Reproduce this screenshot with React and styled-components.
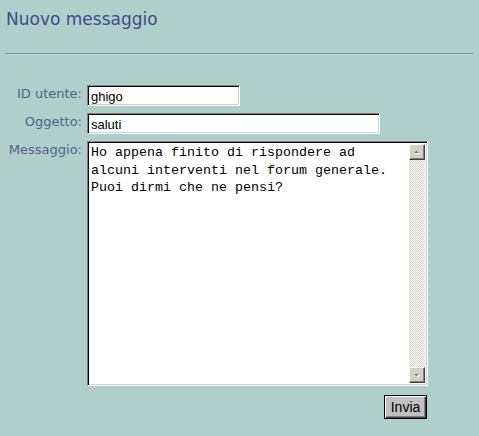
import React from 'react';
import styled, { createGlobalStyle } from 'styled-components';

const GlobalStyle = createGlobalStyle`
  html, body {
    margin: 0;
    padding: 0;
    background: #aecfca;
  }
`;

const Page = styled.div`
  width: 479px;
  height: 436px;
  background: #aecfca;
  padding: 8px 6px 0 6px;
  box-sizing: border-box;
  font-family: "DejaVu Sans", Verdana, sans-serif;
`;

const Title = styled.h1`
  margin: 0;
  font-family: "DejaVu Sans", Verdana, sans-serif;
  font-weight: normal;
  font-size: 17px;
  line-height: 22px;
  color: #3f4b8c;
`;

const Rule = styled.div`
  margin-top: 23px;
  height: 1px;
  background: #7f8f8c;
  border-bottom: 1px solid #b9d6d1;
`;

const Form = styled.form`
  margin-top: 30px;
  display: grid;
  grid-template-columns: 76px auto;
  column-gap: 5px;
  row-gap: 7px;
  align-items: start;
`;

const Label = styled.label`
  text-align: right;
  font-size: 13px;
  line-height: 16px;
  color: #52628f;
  padding-top: 1px;
`;

const inset = `
  border: 1px solid;
  border-color: #808080 #ffffff #ffffff #808080;
  box-shadow: inset 1px 1px #000000, inset -1px -1px #d4d0c8;
  background: #ffffff;
  box-sizing: border-box;
`;

const Input = styled.input`
  ${inset}
  display: block;
  width: ${p => p.$w}px;
  height: 21px;
  padding: 2px 3px 0 3px;
  font-family: "Liberation Sans", Arial, sans-serif;
  font-size: 13px;
  color: #000;
  outline: none;
`;

const AreaBox = styled.div`
  ${inset}
  width: 341px;
  height: 245px;
  padding: 2px;
  display: flex;
`;

const AreaText = styled.div`
  flex: 1;
  padding: 0 1px;
  font-family: "Liberation Mono", "Courier New", monospace;
  font-size: 13.33px;
  line-height: 17.5px;
  color: #000;
  white-space: pre-wrap;
`;

const ScrollBar = styled.div`
  width: 16px;
  display: flex;
  flex-direction: column;
`;

const ScrollButton = styled.div`
  width: 16px;
  height: 16px;
  box-sizing: border-box;
  background: #d4d0c8;
  border: 1px solid;
  border-color: #ffffff #404040 #404040 #ffffff;
  box-shadow: inset -1px -1px #808080, inset 1px 1px #d4d0c8;
  display: flex;
  align-items: center;
  justify-content: center;
`;

const Track = styled.div`
  flex: 1;
  background-color: #ffffff;
  background-image: repeating-conic-gradient(#d4d0c8 0 25%, #ffffff 0 50%);
  background-size: 2px 2px;
`;

const Actions = styled.div`
  grid-column: 2;
  display: flex;
  justify-content: flex-end;
  width: 340px;
  padding-top: 2px;
`;

const Button = styled.button`
  width: 43px;
  height: 24px;
  padding: 0;
  background: #c0c0c0;
  border: 1px solid #000;
  box-shadow: inset 1px 1px #ffffff, inset -1px -1px #404040, inset -2px -2px #808080;
  font-family: "Liberation Sans", Arial, sans-serif;
  font-size: 14px;
  color: #000;
`;

const Arrow = ({ up }) => (
  <svg width="8" height="5" viewBox="0 0 8 5">
    {up ? (
      <>
        <path d="M2 4h5L4.5 1.5z" fill="#ffffff" />
        <path d="M1 3h5L3.5 0.5z" fill="#808080" />
      </>
    ) : (
      <>
        <path d="M2 2h5L4.5 4.5z" fill="#ffffff" />
        <path d="M1 1h5L3.5 3.5z" fill="#808080" />
      </>
    )}
  </svg>
);

export default function App() {
  return (
    <Page>
      <GlobalStyle />
      <Title>Nuovo messaggio</Title>
      <Rule />
      <Form onSubmit={e => e.preventDefault()}>
        <Label>ID utente:</Label>
        <Input $w={153} defaultValue="ghigo" />
        <Label>Oggetto:</Label>
        <Input $w={293} defaultValue="saluti" />
        <Label>Messaggio:</Label>
        <AreaBox>
          <AreaText>{'Ho appena finito di rispondere ad\nalcuni interventi nel forum generale.\nPuoi dirmi che ne pensi?'}</AreaText>
          <ScrollBar>
            <ScrollButton><Arrow up /></ScrollButton>
            <Track />
            <ScrollButton><Arrow /></ScrollButton>
          </ScrollBar>
        </AreaBox>
        <Actions>
          <Button type="submit">Invia</Button>
        </Actions>
      </Form>
    </Page>
  );
}
